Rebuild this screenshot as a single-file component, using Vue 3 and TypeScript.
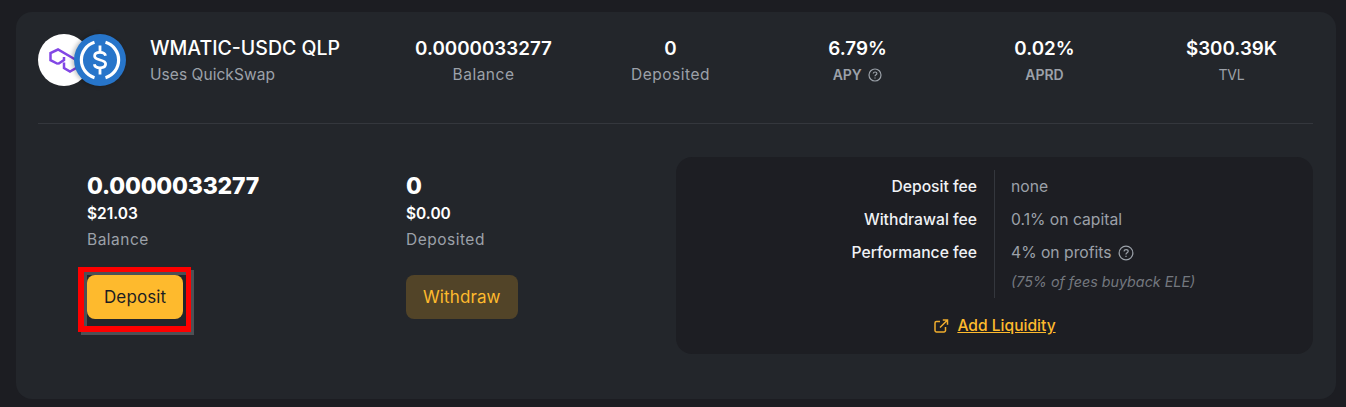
<script setup lang="ts">
const stats = [
  { value: '0.0000033277', label: 'Balance', kind: 'wide', help: false },
  { value: '0', label: 'Deposited', kind: 'wide', help: false },
  { value: '6.79%', label: 'APY', kind: 'strong', help: true },
  { value: '0.02%', label: 'APRD', kind: 'strong', help: false },
  { value: '$300.39K', label: 'TVL', kind: 'plain', help: false },
]
</script>

<template>
  <div class="page">
    <div class="card">
      <div class="head">
        <div class="logos">
          <div class="coin matic">
            <svg width="38" height="26" viewBox="0 0 38 26" fill="none" stroke="#8247e5" stroke-width="2.500" stroke-linejoin="miter">
              <path d="M9 16L1.500 12.200V5L9 1.500L28 12.500" />
              <path d="M9 16L15 12V9" />
              <path d="M15 14.500V20L21 23.500L28 19.500" />
            </svg>
          </div>
          <div class="coin usdc">
            <svg width="52" height="52" viewBox="0 0 52 52" fill="none">
              <path d="M20.500 8.300A18.500 18.500 0 0 0 20.500 43.700" stroke="#fff" stroke-width="3.200" />
              <path d="M31.500 8.300A18.500 18.500 0 0 1 31.500 43.700" stroke="#fff" stroke-width="3.200" />
              <path d="M31.500 21.800c-.4-2.200-2.600-3.400-5.500-3.400-3.100 0-5.400 1.400-5.400 3.700 0 5.300 11 2.500 11 7.900 0 2.400-2.400 3.800-5.600 3.800-3 0-5.300-1.300-5.700-3.600" stroke="#fff" stroke-width="2.800" />
              <path d="M26 11.500v6.500M26 34v6.500" stroke="#fff" stroke-width="2.800" />
            </svg>
          </div>
        </div>
        <div class="title">
          <div class="name">WMATIC-USDC QLP</div>
          <div class="sub">Uses QuickSwap</div>
        </div>
        <div class="stats">
          <div v-for="s in stats" :key="s.label" class="stat">
            <div class="stat-value">{{ s.value }}</div>
            <div class="stat-label" :class="s.kind">
              {{ s.label }}
              <svg v-if="s.help" class="help" width="14" height="14" viewBox="0 0 14 14" fill="none" stroke="#9aa0a8" stroke-width="1.200">
                <circle cx="7" cy="7" r="6" />
                <path d="M5.200 5.500c.2-1 1-1.500 1.900-1.500 1 0 1.800.6 1.800 1.500 0 1.300-1.900 1.400-1.900 2.800" />
                <path d="M7 9.400v1.100" />
              </svg>
            </div>
          </div>
        </div>
      </div>
      <div class="divider"></div>
      <div class="body">
        <div class="col first">
          <div class="amount">0.0000033277</div>
          <div class="usd">$21.03</div>
          <div class="caption">Balance</div>
          <div class="btn-wrap">
            <button class="btn primary">Deposit</button>
            <div class="highlight"></div>
          </div>
        </div>
        <div class="col second">
          <div class="amount">0</div>
          <div class="usd">$0.00</div>
          <div class="caption">Deposited</div>
          <div class="btn-wrap">
            <button class="btn muted">Withdraw</button>
          </div>
        </div>
        <div class="panel">
          <div class="fees">
            <div class="fee-names">
              <div>Deposit fee</div>
              <div>Withdrawal fee</div>
              <div>Performance fee</div>
            </div>
            <div class="fee-values">
              <div>none</div>
              <div>0.1% on capital</div>
              <div class="with-help">
                4% on profits
                <svg width="16" height="16" viewBox="0 0 14 14" fill="none" stroke="#9aa0a8" stroke-width="1.100">
                  <circle cx="7" cy="7" r="6" />
                  <path d="M5.200 5.500c.2-1 1-1.500 1.900-1.500 1 0 1.800.6 1.800 1.500 0 1.300-1.900 1.400-1.900 2.800" />
                  <path d="M7 9.400v1.100" />
                </svg>
              </div>
              <div class="note">(75% of fees buyback ELE)</div>
            </div>
          </div>
          <div class="link-row">
            <svg width="16" height="16" viewBox="0 0 16 16" fill="none" stroke="#f0ad2e" stroke-width="1.500">
              <path d="M7 3.500H3.500a1.500 1.500 0 0 0-1.500 1.500v7.500A1.500 1.500 0 0 0 3.500 14H11a1.500 1.500 0 0 0 1.500-1.500V9" />
              <path d="M7 9.500L14 2.500M9.800 2H14.500V6.700" />
            </svg>
            <a class="link">Add Liquidity</a>
          </div>
        </div>
      </div>
    </div>
  </div>
</template>

<style>
html, body { margin: 0; background: #1c1d22; }
</style>

<style scoped>
.page {
  box-sizing: border-box;
  width: 1346px;
  height: 407px;
  padding: 12px 10px 8px 16px;
  font-family: Inter, "Open Sans", sans-serif;
  background: #1c1d22;
  overflow: hidden;
}
.card {
  box-sizing: border-box;
  height: 387px;
  padding: 22px 23px 0 22px;
  background: #23262b;
  border-radius: 16px;
}
.head {
  display: flex;
  height: 89px;
}
.logos {
  display: flex;
  width: 88px;
  height: 53px;
  flex-shrink: 0;
}
.coin {
  width: 52px;
  height: 52px;
  border-radius: 50%;
  display: flex;
  align-items: center;
  justify-content: center;
  flex-shrink: 0;
}
.matic {
  background: #fff;
  justify-content: flex-start;
  align-items: flex-start;
  padding: 14px 0 0 11px;
  box-sizing: border-box;
}
.usdc {
  background: #2775ca;
  margin-left: -16px;
  box-shadow: -2px 0 4px rgba(0, 0, 0, 0.25);
  position: relative;
}
.title {
  margin-left: 24px;
  width: 240px;
  flex-shrink: 0;
}
.name {
  margin-top: 2px;
  font-size: 19.500px;
  line-height: 25px;
  font-weight: 500;
  color: #fff;
  white-space: nowrap;
}
.sub {
  margin-top: 4px;
  font-size: 15.500px;
  line-height: 20px;
  letter-spacing: 0.05px;
  color: #9ca1a9;
}
.stats {
  display: grid;
  grid-template-columns: repeat(5, 187px);
  flex-shrink: 0;
}
.stat {
  text-align: center;
}
.stat-value {
  margin-top: 2px;
  font-size: 18.800px;
  line-height: 25px;
  font-weight: 600;
  color: #fff;
}
.stat-label {
  margin-top: 4px;
  font-size: 14px;
  line-height: 20px;
  color: #9ca1a9;
}
.stat-label.wide {
  font-size: 15.500px;
  letter-spacing: 0.5px;
}
.stat-label.strong {
  font-weight: 600;
}
.stat-label.plain {
  font-size: 14px;
  letter-spacing: -0.2px;
}
.help {
  margin-left: 3px;
  vertical-align: -2px;
}
.divider {
  height: 1px;
  background: #34373d;
}
.body {
  display: flex;
  margin-top: 33px;
}
.col {
  flex-shrink: 0;
}
.first {
  margin-left: 49px;
  width: 319px;
}
.second {
  width: 270px;
}
.amount {
  margin-top: 14px;
  font-size: 23px;
  line-height: 30px;
  font-weight: 800;
  letter-spacing: -0.2px;
  color: #fff;
}
.usd {
  margin-top: 2px;
  font-size: 15.500px;
  line-height: 21px;
  font-weight: 600;
  color: #fff;
}
.caption {
  margin-top: 6px;
  font-size: 15.500px;
  line-height: 20px;
  letter-spacing: 0.5px;
  color: #9ca1a9;
}
.btn-wrap {
  position: relative;
  display: inline-block;
  margin-top: 25px;
}
.btn {
  display: block;
  height: 44px;
  padding: 0 17px;
  border: none;
  border-radius: 8px;
  font-family: inherit;
  font-size: 17px;
  letter-spacing: 0.1px;
}
.primary {
  background: #feba2d;
  color: #1c1d22;
}
.muted {
  background: #524428;
  color: #feba2d;
}
.highlight {
  position: absolute;
  left: -9px;
  top: -8px;
  right: -8px;
  bottom: -13px;
  box-sizing: border-box;
  border: 5px solid #fe0000;
  border-left-width: 6px;
  border-bottom-width: 6px;
  box-shadow: 3px 3px 0 #4e5055, inset 3px 3px 0 #4e5055;
}
.panel {
  flex: 1;
  height: 197px;
  box-sizing: border-box;
  padding-top: 13px;
  background: #1d1e23;
  border-radius: 16px;
}
.fees {
  display: flex;
  height: 128px;
  font-size: 15.700px;
  line-height: 33px;
}
.fee-names {
  box-sizing: border-box;
  width: 319px;
  padding-right: 17px;
  border-right: 1px solid #34373d;
  text-align: right;
  color: #f0f2f5;
  font-weight: 500;
}
.fee-values {
  padding-left: 16px;
  color: #9ca1a9;
}
.with-help {
  display: flex;
  align-items: center;
  gap: 6px;
}
.note {
  margin-top: -4px;
  font-size: 14.300px;
  font-style: italic;
  color: #74787f;
}
.link-row {
  display: flex;
  justify-content: center;
  align-items: center;
  gap: 8px;
  margin-top: 18px;
  font-size: 15.600px;
}
.link {
  color: #feba2d;
  text-decoration: underline;
  font-weight: 500;
}
</style>
